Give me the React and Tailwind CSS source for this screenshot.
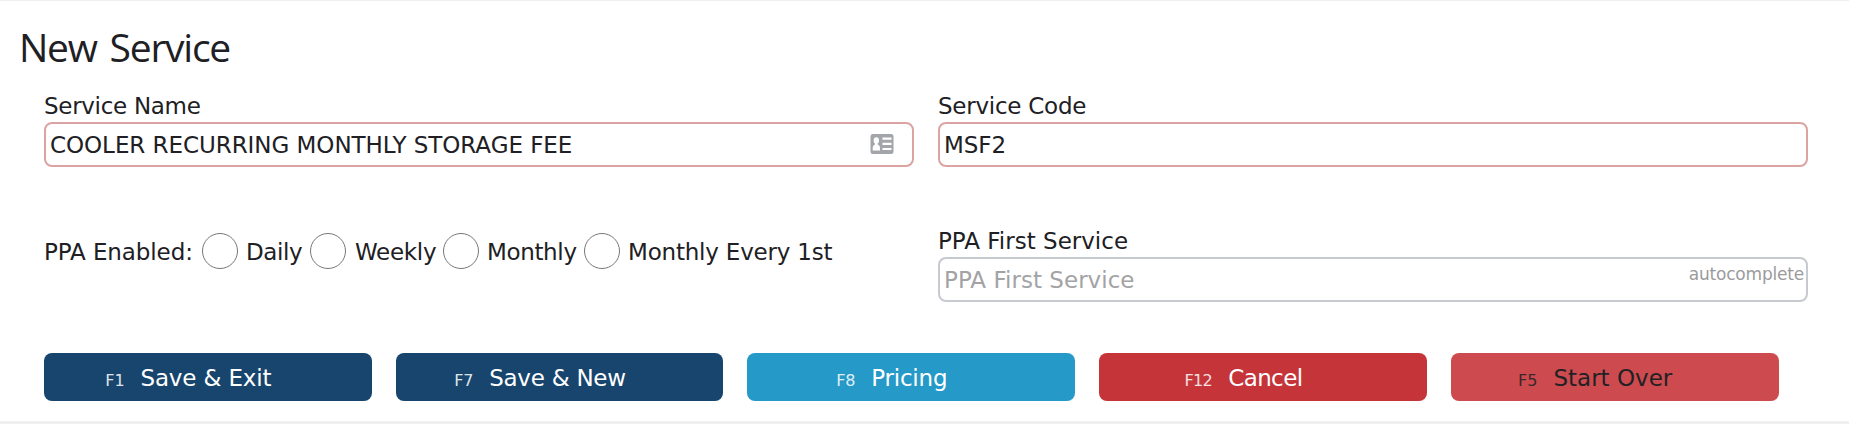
function Field({ label, labelClass = '', name, defaultValue, placeholder, invalid, children }) {
  return (
    <label className="block h-[81px] flex-1">
      <span className={`block h-[36px] text-[23px] leading-[40px] ${labelClass}`}>{label}</span>
      <span
        className={`relative flex h-[45px] items-center rounded-lg border-2 ${
          invalid ? 'border-[#dca3a3]' : 'border-[#c6cacf]'
        }`}
      >
        <input
          name={name}
          defaultValue={defaultValue}
          placeholder={placeholder}
          className="h-full min-w-0 flex-1 bg-transparent px-[4px] text-[23px] tracking-[-0.05px] outline-none placeholder:tracking-[0.03px] placeholder:text-[#a3a3a5]"
        />
        {children}
      </span>
    </label>
  )
}

function ContactCardIcon() {
  return (
    <svg viewBox="0 0 24 20" className="mr-[18px] mb-[2px] h-[20px] w-[24px]">
      <rect x="0.5" y="0" width="23" height="20" rx="2.5" fill="#a2a6aa" />
      <ellipse cx="6.3" cy="6.5" rx="2.7" ry="3.3" fill="#fff" />
      <path d="M5 8h2.600v2.500C9 11 10 12.200 10 14v2.500H2.700V14c0-1.800 1-3 2.300-3.500z" fill="#fff" />
      <path d="M12.500 4.700h9M12.500 9.800h9M12.500 15h9" stroke="#fff" strokeWidth="2.200" />
    </svg>
  )
}

const schedules = [
  { label: 'Daily', className: 'w-[64px] tracking-[-0.4px]' },
  { label: 'Weekly', className: 'w-[89px] pl-px tracking-[-0.3px]' },
  { label: 'Monthly', className: 'w-[97px] tracking-[-0.35px]' },
  { label: 'Monthly Every 1st', className: 'w-[200px] tracking-[-0.2px]' },
]

const actions = [
  { hotkey: 'F1', label: 'Save & Exit', className: 'bg-[#17456d] text-white tracking-[-0.15px]' },
  { hotkey: 'F7', label: 'Save & New', className: 'bg-[#17456d] text-white tracking-[-0.25px]' },
  { hotkey: 'F8', label: 'Pricing', className: 'bg-[#2599c7] text-white tracking-[-0.2px]' },
  { hotkey: 'F12', label: 'Cancel', className: 'bg-[#c53438] text-white tracking-[-0.6px]' },
  { hotkey: 'F5', label: 'Start Over', className: 'bg-[#cd4b4f] text-[#212125]' },
]

function App() {
  return (
    <main className="h-[424px] overflow-hidden border-t border-b-[3px] border-[#f0f0f0] bg-white font-['Verdana','DejaVu_Sans',sans-serif] text-[#202024]">
      <h1 className="mt-[19px] ml-[19px] h-[66px] font-['Segoe_UI','Open_Sans',sans-serif] text-[39px] leading-[54px] tracking-[-1.25px] [word-spacing:4px]">
        New Service
      </h1>

      <form className="pl-[44px]">
        <div className="mr-[41px] flex gap-6">
          <Field
            label="Service Name"
            labelClass="tracking-[-0.3px]"
            name="name"
            defaultValue="COOLER RECURRING MONTHLY STORAGE FEE"
            invalid
          >
            <ContactCardIcon />
          </Field>
          <Field label="Service Code" labelClass="tracking-[-0.25px]" name="code" defaultValue="MSF2" invalid />
        </div>

        <div className="mt-[54px] mr-[41px] flex gap-6">
          <div className="flex h-[60px] flex-1 items-center text-[23px] whitespace-nowrap">
            <span className="w-[158px] pt-[2px] tracking-[-0.1px]">PPA Enabled:</span>
            {schedules.map((item) => (
              <label key={item.label} className="flex items-center">
                <input
                  type="radio"
                  name="schedule"
                  className="mr-[8px] size-[36px] shrink-0 appearance-none rounded-full border border-[#77777b]"
                />
                <span className={`pt-[2px] ${item.className}`}>{item.label}</span>
              </label>
            ))}
          </div>
          <Field label="PPA First Service" name="firstService" placeholder="PPA First Service">
            <span className="absolute top-[4px] right-[2px] text-[17px] leading-[22px] tracking-[-0.2px] text-[#9b9b9d]">
              autocomplete
            </span>
          </Field>
        </div>

        <div className="mt-[51px] mr-[70.5px] flex gap-6">
          {actions.map((action) => (
            <button
              key={action.hotkey}
              type="button"
              className={`flex h-[48px] flex-1 items-baseline justify-center rounded-lg pt-[8px] pr-[39px] text-[23px] leading-[34px] ${action.className}`}
            >
              <span className="mr-[16px] text-[16px] opacity-85">{action.hotkey}</span>
              {action.label}
            </button>
          ))}
        </div>
      </form>
    </main>
  )
}

export default App
